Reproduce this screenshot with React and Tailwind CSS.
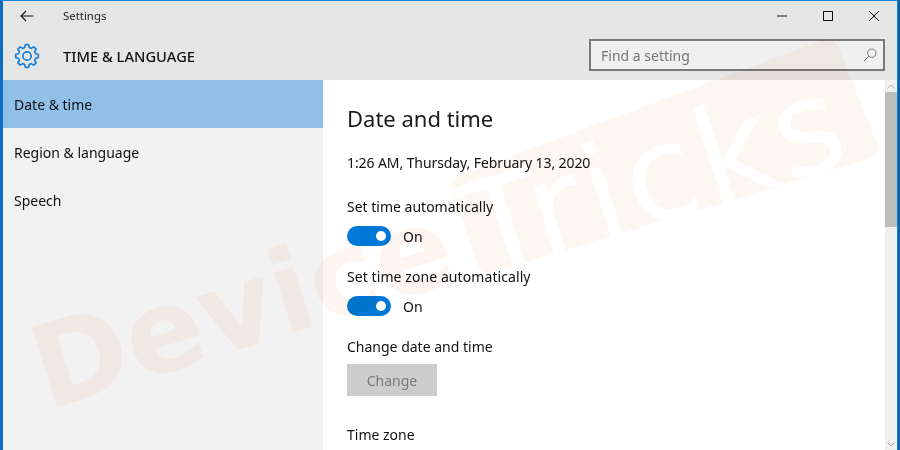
const font = "font-['Noto_Sans','Open_Sans',sans-serif]";

function gearPoints() {
  const pts = [];
  const teeth = 8;
  for (let i = 0; i < teeth; i++) {
    const a = (i / teeth) * Math.PI * 2;
    const step = (Math.PI * 2) / teeth;
    [[-0.3, 8.8], [-0.17, 11.4], [0.17, 11.4], [0.3, 8.8]].forEach(([f, r]) => {
      const t = a + f * step * 1.1;
      pts.push((13 + r * Math.sin(t)).toFixed(2) + ',' + (13 - r * Math.cos(t)).toFixed(2));
    });
  }
  return pts.join(' ');
}

function Gear() {
  return (
    <svg width="26" height="26" viewBox="0 0 26 26" fill="none" stroke="#1482dc" strokeWidth="1.7" strokeLinejoin="round">
      <polygon points={gearPoints()} />
      <circle cx="13" cy="13" r="4.2" />
    </svg>
  );
}

function Toggle() {
  return (
    <div className="flex items-center h-5 gap-3">
      <div className="w-[44px] h-5 rounded-full bg-[#0078d7] flex items-center justify-end pr-[5px]">
        <div className="w-[10px] h-[10px] rounded-full bg-white" />
      </div>
      <span className="text-[14px] text-[#111]">On</span>
    </div>
  );
}

// faint logo stamped over the whole shot
function Watermark() {
  return (
    <div className="absolute inset-0 overflow-hidden pointer-events-none mix-blend-multiply">
      <svg className="absolute inset-0" width="900" height="450" viewBox="0 0 900 450">
        <path d="M462 186 828 50 867 148 488 262Z" fill="#fdf7f2" stroke="#fdf7f2" strokeWidth="22" strokeLinejoin="round" />
      </svg>
      <div className="absolute left-[35px] top-[287px] w-[880px] h-[170px] flex items-center origin-left -rotate-[17.5deg] font-['DejaVu_Sans',sans-serif]">
        <span className="font-bold text-[115px] leading-none text-[#fef5f1]">Device</span>
        <span className="ml-[20px] text-[130px] leading-none tracking-[5px] text-white">Tricks</span>
      </div>
    </div>
  );
}

export default function App() {
  return (
    <div className={`relative w-[900px] h-[450px] overflow-hidden bg-[#0b5fa8] pr-[2px] ${font}`}>
      <div className="h-full flex flex-col border-t border-[#0f86dc] border-l-[3px] border-l-[#0a6fc4] border-r border-r-[#0f86dc] bg-white">
        <div className="h-[79px] bg-[#e6e6e6] shrink-0 flex flex-col">
          <div className="h-[30px] flex items-center">
            <svg className="ml-[17px]" width="14" height="12" viewBox="0 0 14 12" fill="none" stroke="#111" strokeWidth="1.1">
              <path d="M13.5 6H1M6 1 1 6l5 5" />
            </svg>
            <span className="ml-[29px] text-[11.4px] text-[#222]">Settings</span>
            <div className="ml-auto flex items-center">
              <svg width="10" height="2" viewBox="0 0 10 2" className="mr-[36px]"><path d="M0 1h10" stroke="#111" strokeWidth="1" /></svg>
              <svg width="10" height="10" viewBox="0 0 10 10" className="mr-[36px]"><rect x=".5" y=".5" width="9" height="9" fill="none" stroke="#111" /></svg>
              <svg width="10" height="10" viewBox="0 0 10 10" className="mr-[18px]"><path d="M0 0l10 10M10 0 0 10" stroke="#111" strokeWidth="1" /></svg>
            </div>
          </div>
          <div className="h-[49px] flex items-center">
            <div className="ml-[11px] w-[26px] h-[26px]"><Gear /></div>
            <span className="ml-[23px] mt-[1px] text-[14.7px] font-medium text-[#111]">TIME &amp; LANGUAGE</span>
            <div className="ml-auto mr-[12px] w-[296px] h-[32px] border-2 border-[#7a7a7a] bg-[#f0f0f0] flex items-center pl-[10px] pr-[6px] -mt-[1px]">
              <span className="text-[14px] text-[#767676]">Find a setting</span>
              <svg className="ml-auto" width="14" height="14" viewBox="0 0 14 14" fill="none" stroke="#777" strokeWidth="1">
                <circle cx="8.800" cy="5.200" r="4.200" />
                <path d="M5.800 8.200 1 13" />
              </svg>
            </div>
          </div>
        </div>
        <div className="flex-1 flex min-h-0">
          <div className="w-[320px] bg-[#f2f2f2] shrink-0 text-[14px] text-[#111]">
            <div className="h-12 bg-[#90c0e8] flex items-center pl-[11px]">Date &amp; time</div>
            <div className="h-12 flex items-center pl-[11px]">Region &amp; language</div>
            <div className="h-12 flex items-center pl-[11px]">Speech</div>
          </div>
          <div className="flex-1 pl-[24px] text-[14px] text-[#111]">
            <div className="h-[76px] flex items-center text-[22px] text-[#1a1a1a]">Date and time</div>
            <div className="leading-5 h-5 -mt-[3px] tracking-[-0.09px]">1:26 AM, Thursday, February 13, 2020</div>
            <div className="leading-5 h-5 mt-6">Set time automatically</div>
            <div className="mt-[9px]"><Toggle /></div>
            <div className="leading-5 h-5 mt-[21px] tracking-[0.08px]">Set time zone automatically</div>
            <div className="mt-[9px]"><Toggle /></div>
            <div className="leading-5 h-5 mt-[21px]">Change date and time</div>
            <div className="mt-[7px] w-[90px] h-8 bg-[#cccccc] text-[#7a7a7a] flex items-center justify-center">Change</div>
            <div className="leading-5 h-5 mt-[29px]">Time zone</div>
          </div>
          <div className="w-[12px] bg-[#f0f0f0] shrink-0 flex flex-col items-center">
            <div className="h-[12px] flex items-center">
              <svg width="8" height="5" viewBox="0 0 8 5" fill="none" stroke="#aaa"><path d="M.5 4.500 4 1l3.500 3.500" /></svg>
            </div>
            <div className="w-full h-[135px] bg-[#bdbdbd]" />
            <div className="mt-auto h-[12px] flex items-center">
              <svg width="8" height="5" viewBox="0 0 8 5" fill="none" stroke="#aaa"><path d="M.5.5 4 4 7.500.5" /></svg>
            </div>
          </div>
        </div>
      </div>
      <Watermark />
    </div>
  );
}
